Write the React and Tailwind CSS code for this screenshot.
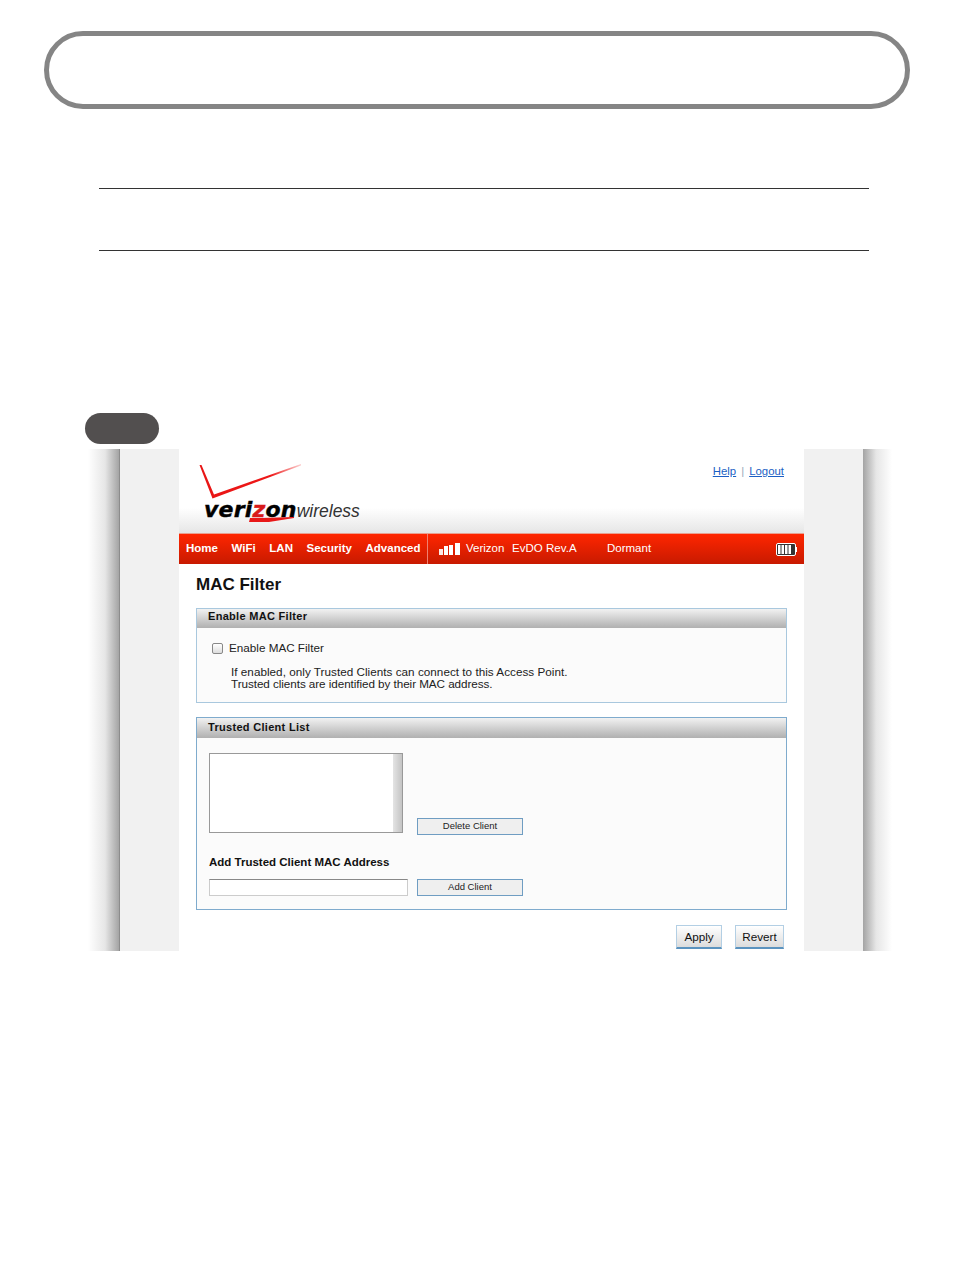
import React from 'react';

const panelHead = 'bg-gradient-to-b from-[#f2f2f2] to-[#b0b0b0] pl-[11px] text-[11px] font-bold tracking-[0.3px] text-[#111]';

function GreyButton({ label, className }) {
    return (
        <div className={`flex h-[17px] w-[106px] items-center justify-center border border-[#6f9dc2] bg-[#efefef] text-[9.5px] text-[#222] ${className || ''}`}>
            {label}
        </div>
    );
}

function ActionButton({ label, width }) {
    return (
        <div className={`flex h-[24px] items-center justify-center border border-[#b3cfe4] border-b-2 border-b-[#5b93bf] bg-gradient-to-b from-white to-[#dcdcdc] text-[11.7px] text-[#111] ${width}`}>
            {label}
        </div>
    );
}

function Logo() {
    return (
        <div className="relative h-[84px] bg-gradient-to-b from-white from-70% to-[#e6e6e6]">
            <svg className="absolute left-[20px] top-[15px]" width="104" height="36" viewBox="0 0 104 36">
                <defs>
                    <linearGradient id="fade" x1="0" x2="1" y1="0" y2="0">
                        <stop offset="0" stopColor="#e81616" />
                        <stop offset="0.7" stopColor="#ee1818" />
                        <stop offset="1" stopColor="#ee1818" stopOpacity="0.2" />
                    </linearGradient>
                </defs>
                <polygon points="0.5,1 2.5,1 15,30.5 102,0 102,1.5 13.5,34.5" fill="url(#fade)" />
            </svg>
            <div className="absolute left-[25px] top-[46px] flex items-baseline whitespace-nowrap text-black">
                <span className="font-['DejaVu_Sans',sans-serif] text-[22px] font-bold italic leading-[30px] tracking-[0.2px] [-webkit-text-stroke:0.4px_currentColor]">
                    veri<span className="text-[#d81a1a]">z</span>on
                </span>
                <span className="text-[17.5px] italic leading-[30px] text-[#333]">wireless</span>
            </div>
            <svg className="absolute left-[68px] top-[66px]" width="50" height="8" viewBox="0 0 50 8">
                <path d="M3 3 L14 3 L47 2 L47 3 L22 7 L2 7 Z" fill="#e81818" />
            </svg>
            <div className="flex justify-end pr-[20px] pt-[15px] text-[11.4px] leading-[14px] text-[#1b5fc4]">
                <span className="underline">Help</span>
                <span className="mx-[5px] text-[#9ab]">|</span>
                <span className="underline">Logout</span>
            </div>
        </div>
    );
}

function SignalIcon() {
    return (
        <svg width="21" height="12" viewBox="0 0 21 12" fill="#fff">
            <rect x="0" y="6" width="4" height="6" opacity="0.9" />
            <rect x="5" y="3" width="4" height="9" />
            <rect x="10" y="2" width="4" height="10" />
            <rect x="16" y="0" width="5" height="12" />
        </svg>
    );
}

function BatteryIcon() {
    return (
        <svg width="21" height="13" viewBox="0 0 21 13">
            <rect x="0.5" y="0.5" width="19" height="12" rx="1.5" fill="#333" stroke="#fff" />
            <rect x="2" y="2" width="2.5" height="9" fill="#fff" />
            <rect x="5.5" y="2" width="2.5" height="9" fill="#fff" />
            <rect x="9" y="2" width="2.5" height="9" fill="#fff" />
            <rect x="12.5" y="2" width="2.5" height="9" fill="#fff" />
            <rect x="20" y="4" width="1" height="5" fill="#fff" />
        </svg>
    );
}

function NavBar() {
    return (
        <div className="flex h-[31px] items-center border-t border-t-[#e9a090] bg-gradient-to-b from-[#ff2600] to-[#c81a00] text-[11.5px] text-white">
            <div className="flex h-full w-[248px] items-center gap-[13.6px] pl-[7px] font-bold">
                <span>Home</span>
                <span>WiFi</span>
                <span>LAN</span>
                <span>Security</span>
                <span>Advanced</span>
            </div>
            <div className="h-full w-px bg-[#f08070]" />
            <div className="ml-[11px] flex"><SignalIcon /></div>
            <span className="ml-[6px] w-[46px]">Verizon</span>
            <span className="w-[95px] tracking-[0.03px]">EvDO Rev.A</span>
            <span>Dormant</span>
            <div className="ml-auto mr-[7px] flex"><BatteryIcon /></div>
        </div>
    );
}

export default function App() {
    return (
        <div className="h-[1270px] w-[954px] overflow-hidden bg-white pt-[31px] font-['Liberation_Sans',Arial,sans-serif]">
            <div className="mx-[44px] h-[78px] rounded-[39px] border-[5px] border-[#858585]" />

            <div className="ml-[99px] mt-[79px] h-px w-[770px] bg-[#333]" />
            <div className="ml-[99px] mt-[61px] h-px w-[770px] bg-[#333]" />

            <div className="ml-[85px] mt-[162px] h-[31px] w-[74px] rounded-[16px] bg-[#524f4f]" />

            <div className="ml-[88px] mt-[5px] flex h-[502px] w-[804px]">
                <div className="w-[31px] bg-gradient-to-r from-white via-[#e6e6e6] via-55% to-[#a4a4a4]" />
                <div className="w-px bg-[#8c8c8c]" />
                <div className="w-[59px] bg-[#f1f1f1]" />

                <div className="w-[625px] bg-white">
                    <Logo />
                    <NavBar />

                    <div className="px-[17px]">
                        <h1 className="mt-[11px] text-[17px] font-bold leading-[20px] text-[#111]">MAC Filter</h1>

                        <div className="mt-[13px] h-[95px] border border-[#a9c8de] bg-[#fbfbfb]">
                            <div className={panelHead + ' h-[19px] leading-[15px]'}>Enable MAC Filter</div>
                            <div className="mt-[14px] flex items-center pl-[15px] text-[11.7px] leading-[12px] text-[#222]">
                                <div className="h-[11px] w-[11px] rounded-[2px] border border-[#888] bg-gradient-to-b from-white to-[#ddd]" />
                                <span className="ml-[6px]">Enable MAC Filter</span>
                            </div>
                            <p className="mt-[12px] pl-[34px] text-[11.7px] leading-[12px] text-[#222]">
                                <span className="tracking-[0.03px]">If enabled, only Trusted Clients can connect to this Access Point.</span>
                                <br />
                                <span className="tracking-[-0.06px]">Trusted clients are identified by their MAC address.</span>
                            </p>
                        </div>

                        <div className="mt-[14px] h-[193px] border border-[#7fabcd] bg-[#fbfbfb] pb-[13px]">
                            <div className={panelHead + ' h-[20px] leading-[19px]'}>Trusted Client List</div>
                            <div className="ml-[12px] mt-[15px] flex items-end">
                                <div className="flex h-[80px] w-[194px] justify-end border border-[#999] bg-white">
                                    <div className="w-[9px] bg-gradient-to-r from-[#e4e4e4] to-[#c4c4c4]" />
                                </div>
                                <GreyButton label="Delete Client" className="-mb-[2px] ml-[14px]" />
                            </div>
                            <div className="ml-[12px] mt-[22px] text-[11.5px] font-bold leading-[14px] text-[#111]">Add Trusted Client MAC Address</div>
                            <div className="ml-[12px] mt-[10px] flex">
                                <div className="h-[17px] w-[199px] border border-[#ccc] border-t-[#888] bg-white" />
                                <GreyButton label="Add Client" className="ml-[9px]" />
                            </div>
                        </div>

                        <div className="mt-[15px] flex justify-end gap-[13px] pr-[3px]">
                            <ActionButton label="Apply" width="w-[46px]" />
                            <ActionButton label="Revert" width="w-[49px]" />
                        </div>
                    </div>
                </div>

                <div className="w-[59px] bg-[#f1f1f1]" />
                <div className="w-[29px] bg-gradient-to-r from-[#a4a4a4] via-[#e6e6e6] via-45% to-white" />
            </div>
        </div>
    );
}
